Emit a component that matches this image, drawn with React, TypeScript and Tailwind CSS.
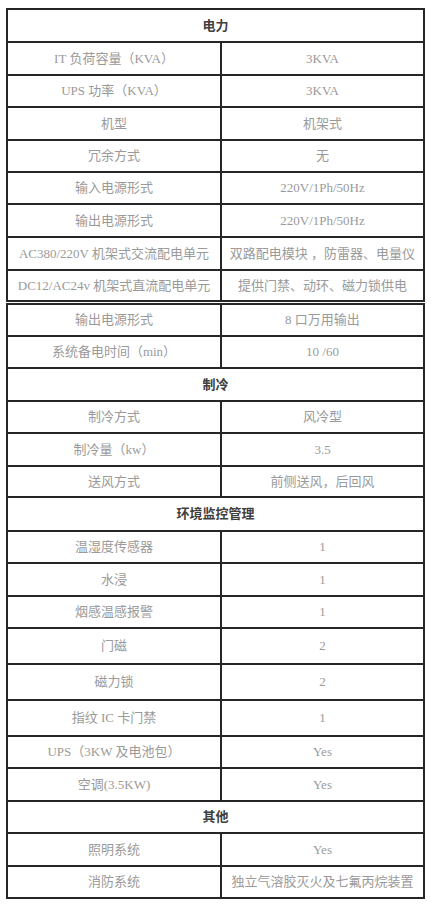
type Row = { k: string; v?: string; h: number; head?: boolean };

const blockA: Row[] = [
  { k: '电力', h: 33, head: true },
  { k: 'IT 负荷容量（KVA）', v: '3KVA', h: 33 },
  { k: 'UPS 功率（KVA）', v: '3KVA', h: 32 },
  { k: '机型', v: '机架式', h: 33 },
  { k: '冗余方式', v: '无', h: 32 },
  { k: '输入电源形式', v: '220V/1Ph/50Hz', h: 32 },
  { k: '输出电源形式', v: '220V/1Ph/50Hz', h: 33 },
  { k: 'AC380/220V 机架式交流配电单元', v: '双路配电模块 ，防雷器、电量仪', h: 33 },
  { k: 'DC12/AC24v 机架式直流配电单元', v: '提供门禁、动环、磁力锁供电', h: 31 },
];

const blockB: Row[] = [
  { k: '输出电源形式', v: '8 口万用输出', h: 32 },
  { k: '系统备电时间（min）', v: '10 /60', h: 32 },
  { k: '制冷', h: 33, head: true },
  { k: '制冷方式', v: '风冷型', h: 32 },
  { k: '制冷量（kw）', v: '3.5', h: 33 },
  { k: '送风方式', v: '前侧送风，后回风', h: 31 },
  { k: '环境监控管理', h: 34, head: true },
  { k: '温湿度传感器', v: '1', h: 32 },
  { k: '水浸', v: '1', h: 33 },
  { k: '烟感温感报警', v: '1', h: 32 },
  { k: '门磁', v: '2', h: 36 },
  { k: '磁力锁', v: '2', h: 36 },
  { k: '指纹 IC 卡门禁', v: '1', h: 36 },
  { k: 'UPS（3KW 及电池包）', v: 'Yes', h: 32 },
  { k: '空调(3.5KW)', v: 'Yes', h: 33 },
  { k: '其他', h: 32, head: true },
  { k: '照明系统', v: 'Yes', h: 33 },
  { k: '消防系统', v: '独立气溶胶灭火及七氟丙烷装置', h: 32 },
];

function TableRow({ row }: { row: Row }) {
  if (row.head) {
    return (
      <div
        className="flex items-center justify-center border-b-2 border-[#262626] text-[13px] font-bold text-[#404040]"
        style={{ height: row.h }}
      >
        {row.k}
      </div>
    );
  }
  return (
    <div className="grid grid-cols-[214px_1fr] border-b-2 border-[#262626]" style={{ height: row.h }}>
      <div className="flex items-center justify-center border-r-2 border-[#262626] whitespace-nowrap text-[13px] text-[#9a9a9a]">
        {row.k}
      </div>
      <div className="flex items-center justify-center whitespace-nowrap text-[13px] text-[#9a9a9a]">{row.v}</div>
    </div>
  );
}

export default function App() {
  return (
    <div
      className="min-h-[905px] w-[431px] bg-white pt-[8px]"
      style={{ fontFamily: '"Liberation Serif", "Noto Sans CJK SC", serif' }}
    >
      <div className="ml-[6px] w-[419px] border-x-2 border-t-2 border-[#262626]">
        {blockA.map((r, i) => (
          <TableRow key={i} row={r} />
        ))}
      </div>
      <div className="ml-[6px] mt-[1px] w-[419px] border-x-2 border-t-2 border-[#262626]">
        {blockB.map((r, i) => (
          <TableRow key={i} row={r} />
        ))}
      </div>
    </div>
  );
}
